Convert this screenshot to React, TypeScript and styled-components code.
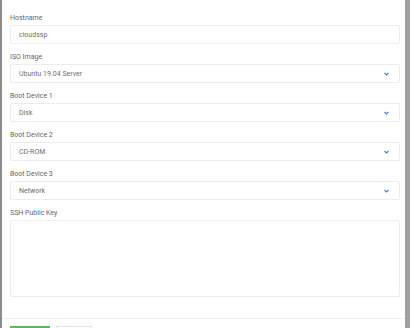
import * as React from "react";
import styled, { createGlobalStyle } from "styled-components";

const GlobalStyle = createGlobalStyle`
  html, body {
    margin: 0;
    padding: 0;
    background: #ffffff;
    font-family: Roboto, "Liberation Sans", sans-serif;
  }
`;

const Modal = styled.div`
  box-sizing: border-box;
  width: 410px;
  height: 328px;
  overflow: hidden;
  background: #ffffff;
  border-left: 2px solid #8c8c8c;
  border-right: 5px solid #a0a0a0;
  display: flex;
  flex-direction: column;
`;

const Body = styled.div`
  flex-shrink: 0;
  padding: 13px 5px 0 8px;
  display: flex;
  flex-direction: column;
  gap: 8px;
`;

const Group = styled.div`
  display: flex;
  flex-direction: column;
  gap: 2px;
`;

const Label = styled.label`
  font-size: 7px;
  line-height: 10px;
  color: #666666;
`;

const Field = styled.div<{ $tall?: boolean }>`
  box-sizing: border-box;
  height: ${(p) => (p.$tall ? "77px" : "19px")};
  border: 1px solid #ebebf0;
  border-radius: 2px;
  padding: 0 8px;
  display: flex;
  align-items: ${(p) => (p.$tall ? "flex-start" : "center")};
  justify-content: space-between;
  font-size: 7px;
  color: #6e6e6e;
`;

const Chevron = styled.svg`
  width: 5px;
  height: 4px;
  margin-right: 2px;
`;

const Divider = styled.div`
  flex-shrink: 0;
  margin-top: 21px;
  border-top: 1px solid #efefef;
`;

const Footer = styled.div`
  flex-shrink: 0;
  padding: 7px 8px 0;
  display: flex;
  gap: 6px;
`;

const Button = styled.div<{ $primary?: boolean }>`
  box-sizing: border-box;
  width: ${(p) => (p.$primary ? "40px" : "36px")};
  height: 16px;
  background: ${(p) => (p.$primary ? "#5cb85c" : "#ffffff")};
  border: 1px solid ${(p) => (p.$primary ? "#5cb85c" : "#e4e4e4")};
`;

const Arrow = () => (
  <Chevron viewBox="0 0 10 7">
    <path d="M1 1.5 L5 5.5 L9 1.5" fill="none" stroke="#4f78c8" strokeWidth="2.2" />
  </Chevron>
);

const selects = [
  { label: "ISO Image", value: "Ubuntu 19.04 Server" },
  { label: "Boot Device 1", value: "Disk" },
  { label: "Boot Device 2", value: "CD-ROM" },
  { label: "Boot Device 3", value: "Network" },
];

export default function App() {
  return (
    <>
      <GlobalStyle />
      <Modal>
        <Body>
          <Group>
            <Label>Hostname</Label>
            <Field>cloudssp</Field>
          </Group>
          {selects.map((s) => (
            <Group key={s.label}>
              <Label>{s.label}</Label>
              <Field>
                {s.value}
                <Arrow />
              </Field>
            </Group>
          ))}
          <Group>
            <Label>SSH Public Key</Label>
            <Field $tall />
          </Group>
        </Body>
        <Divider />
        <Footer>
          <Button $primary />
          <Button />
        </Footer>
      </Modal>
    </>
  );
}
